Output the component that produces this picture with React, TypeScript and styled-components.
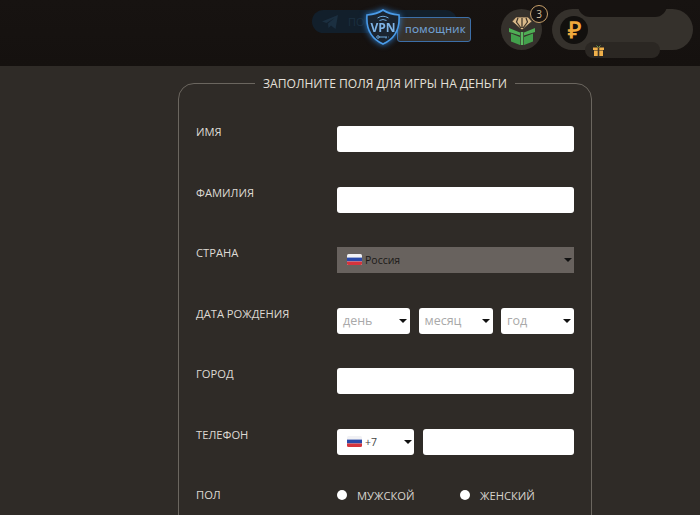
import React from 'react'
import styled, { createGlobalStyle } from 'styled-components'

const GlobalStyle = createGlobalStyle`
  html, body {
    margin: 0;
    height: 515px;
    overflow: hidden;
    background: #2f2b27;
    font-family: "Open Sans", "Liberation Sans", sans-serif;
  }
`

const Flag: React.FC = () => (
  <StyledFlag viewBox="0 0 15 11">
    <rect width="15" height="11" rx="1.5" fill="#f1f1f4" />
    <rect y="3.6" width="15" height="3.8" fill="#2a49a8" />
    <path d="M0 7.4h15v2.1a1.5 1.5 0 0 1-1.5 1.5h-12A1.5 1.5 0 0 1 0 9.5z" fill="#d5343c" />
  </StyledFlag>
)

const VpnShield: React.FC = () => (
  <StyledShield viewBox="0 0 36 36">
    <path
      d="M18 1 C23 4.500 28 5.500 34 6 C35 19 31 29 18 35 C5 29 1 19 2 6 C8 5.500 13 4.500 18 1z"
      fill="#1a2430"
      stroke="#4a9be8"
      strokeWidth="1.6"
    />
    <path d="M12.500 9 Q18 5.500 23.500 9 M14.500 11.500 Q18 9.500 21.500 11.500" fill="none" stroke="#6fa9dc" strokeWidth="1" />
    <text x="18" y="23" textAnchor="middle" fontSize="12" fontWeight="700" fill="#7fb4e6" fontFamily="Open Sans, sans-serif">
      VPN
    </text>
    <path d="M13.500 28 H22 M21 28 v1.500 M23 28 h0.500" stroke="#6fa9dc" strokeWidth="1" fill="none" />
    <circle cx="13" cy="28" r="1.300" fill="none" stroke="#6fa9dc" strokeWidth="0.900" />
  </StyledShield>
)

const GemBox: React.FC = () => (
  <svg width="28" height="30" viewBox="0 0 28 30">
    <path d="M8 2h12l4 4.500-10 8.500L4 6.500z" fill="#d9b98a" stroke="#3a3026" strokeWidth="0.800" />
    <path d="M10 3l-1.500 4L13 13M18 3l1.500 4L15 13M14 3v10" stroke="#3a3026" strokeWidth="1.200" fill="none" />
    <path d="M1 13l11 4.500v3L1 17z" fill="#4fae55" />
    <path d="M27 13l-11 4.500v3L27 17z" fill="#4fae55" />
    <path d="M3 18.500l9 3.500v8l-9-3.500z" fill="#43a14c" />
    <path d="M25 18.500l-9 3.500v8l9-3.500z" fill="#43a14c" />
    <rect x="12.700" y="17" width="2.600" height="13" fill="#5cbb62" />
  </svg>
)

const GiftIcon: React.FC = () => (
  <svg width="11" height="11" viewBox="0 0 11 11">
    <path d="M3.500 0.500L5.500 2.500 7.500 0.500" fill="none" stroke="#6f9a4c" strokeWidth="1" />
    <rect x="0" y="2.500" width="11" height="2.500" fill="#f0b04a" />
    <rect x="1" y="5.500" width="9" height="5.500" fill="#f0b04a" />
    <rect x="4.700" y="2.500" width="1.600" height="8.500" fill="#3a342c" />
  </svg>
)

const TelegramIcon: React.FC = () => (
  <svg width="16" height="14" viewBox="0 0 16 14">
    <path d="M0 6.500L16 0l-2.500 14-4.500-3.500-2.500 2.500-.5-4.500 6.500-5.500-8 5z" fill="#1b2f40" />
  </svg>
)

const App: React.FC = () => (
  <>
    <GlobalStyle />
    <Header>
      <GhostPill>
        <TelegramIcon />
        <GhostText>ПО</GhostText>
      </GhostPill>
      <VpnBanner>
        <VpnLabel>ПОМОЩНИК</VpnLabel>
        <VpnShield />
      </VpnBanner>
      <GemButton>
        <GemBox />
        <GemBadge>3</GemBadge>
      </GemButton>
      <BalancePill>
        <BalanceNotch />
        <RubleCoin>₽</RubleCoin>
        <BonusPill>
          <GiftIcon />
        </BonusPill>
      </BalancePill>
    </Header>
    <Form as="fieldset">
      <Legend>ЗАПОЛНИТЕ ПОЛЯ ДЛЯ ИГРЫ НА ДЕНЬГИ</Legend>
      <Row>
        <RowLabel>ИМЯ</RowLabel>
        <NameInput />
      </Row>
      <Row>
        <RowLabel>ФАМИЛИЯ</RowLabel>
        <TextInput />
      </Row>
      <Row>
        <RowLabel>СТРАНА</RowLabel>
        <CountrySelect>
          <Flag />
          Россия
          <Caret />
        </CountrySelect>
      </Row>
      <Row>
        <RowLabel>ДАТА РОЖДЕНИЯ</RowLabel>
        <DateGroup>
          <DateSelect>
            день
            <Caret />
          </DateSelect>
          <DateSelect>
            месяц
            <Caret />
          </DateSelect>
          <DateSelect>
            год
            <Caret />
          </DateSelect>
        </DateGroup>
      </Row>
      <Row>
        <RowLabel>ГОРОД</RowLabel>
        <TextInput />
      </Row>
      <Row>
        <RowLabel>ТЕЛЕФОН</RowLabel>
        <PhoneGroup>
          <PhoneCode>
            <Flag />
            +7
            <Caret />
          </PhoneCode>
          <TextInput />
        </PhoneGroup>
      </Row>
      <GenderRow>
        <GenderLabel>ПОЛ</GenderLabel>
        <GenderGroup>
          <RadioOption>
            <RadioDot />
            МУЖСКОЙ
          </RadioOption>
          <RadioOption>
            <RadioDot />
            ЖЕНСКИЙ
          </RadioOption>
        </GenderGroup>
      </GenderRow>
    </Form>
  </>
)

const Header = styled.header`
  position: relative;
  display: flex;
  align-items: flex-start;
  box-sizing: border-box;
  height: 66px;
  padding: 9px 7px 0 501px;
  gap: 10px;
  background: linear-gradient(#171311, #15110f);
`

const GhostPill = styled.div`
  position: absolute;
  left: 312px;
  top: 10px;
  width: 145px;
  height: 23px;
  box-sizing: border-box;
  padding-left: 10px;
  display: flex;
  align-items: center;
  gap: 10px;
  border-radius: 12px;
  background: #121f2b;
`

const GhostText = styled.span`
  font-size: 11px;
  color: #1b2f40;
`

const VpnBanner = styled.div`
  position: absolute;
  left: 365px;
  top: 9px;
  width: 106px;
  height: 36px;
`

const VpnLabel = styled.div`
  position: absolute;
  left: 32px;
  top: 8px;
  width: 74px;
  height: 25px;
  box-sizing: border-box;
  padding-left: 7px;
  line-height: 24px;
  border: 1px solid #3d6fa8;
  border-radius: 3px;
  background: #37322c;
  font-size: 9px;
  font-weight: 600;
  letter-spacing: 0.3px;
  color: #6f9fd0;
  white-space: nowrap;
`

const StyledShield = styled.svg`
  position: absolute;
  left: 0;
  top: 0;
  width: 36px;
  height: 36px;
  filter: drop-shadow(0 0 3px #2f7fd0);
`

const GemButton = styled.div`
  position: relative;
  flex: none;
  display: flex;
  align-items: center;
  justify-content: center;
  width: 41px;
  height: 41px;
  border-radius: 50%;
  background: #35312c;
`

const GemBadge = styled.span`
  position: absolute;
  right: -6px;
  top: -4px;
  box-sizing: border-box;
  width: 18px;
  height: 18px;
  border: 1px solid #c8a06a;
  border-radius: 50%;
  background: #171311;
  font-size: 10px;
  line-height: 16px;
  text-align: center;
  color: #d8c3a0;
`

const BalancePill = styled.div`
  position: relative;
  flex: none;
  display: flex;
  align-items: center;
  box-sizing: border-box;
  width: 141px;
  height: 41px;
  padding-left: 8px;
  border-radius: 21px;
  background: #35312c;
`

const BalanceNotch = styled.div`
  position: absolute;
  left: 26px;
  top: -9px;
  width: 89px;
  height: 17px;
  border-radius: 0 0 12px 12px;
  background: #171311;
`

const RubleCoin = styled.div`
  width: 28px;
  height: 28px;
  border-radius: 50%;
  background: #12100e;
  font-family: "Liberation Sans", sans-serif;
  font-size: 23px;
  font-weight: 700;
  line-height: 28px;
  text-align: center;
  color: #f0a93c;
`

const BonusPill = styled.div`
  position: absolute;
  left: 33px;
  top: 33px;
  display: flex;
  align-items: center;
  box-sizing: border-box;
  width: 75px;
  height: 16px;
  padding-left: 8px;
  border-radius: 8px;
  background: #2b2723;
`

const Form = styled.div`
  box-sizing: border-box;
  width: 414px;
  height: 560px;
  margin: 9px 0 0 178px;
  padding: 34px 17px 0;
  border: 1px solid #6b665f;
  border-radius: 16px;
  min-width: 0;
`

const Legend = styled.legend`
  margin: 0 auto;
  padding: 0 8px;
  font-size: 12.100px;
  line-height: 17px;
  color: #e4e0da;
`

const Row = styled.div`
  display: grid;
  grid-template-columns: 141px 237px;
  height: 26px;
  margin-bottom: 34.500px;
`

const GenderRow = styled(Row)`
  align-items: center;
  margin-top: -7px;
`

const RowLabel = styled.div`
  margin-top: -1px;
  padding-bottom: 2px;
  font-size: 11.200px;
  line-height: 14px;
  color: #dedad4;
`

const GenderLabel = styled(RowLabel)`
  margin-top: 0;
  padding-bottom: 0;
`

const TextInput = styled.div`
  height: 26px;
  flex: 1;
  border-radius: 3px;
  background: #fff;
`

const NameInput = styled(TextInput)`
  position: relative;

  &::after {
    content: "";
    position: absolute;
    left: 208px;
    top: -1px;
    width: 16px;
    height: 29px;
    border-radius: 4px;
    background: #e6e4e1;
    z-index: -1;
  }
`

const Caret = styled.i`
  margin-left: auto;
  width: 0;
  height: 0;
  border-left: 4px solid transparent;
  border-right: 4px solid transparent;
  border-top: 4px solid #111;
`

const CountrySelect = styled.div`
  display: flex;
  align-items: center;
  gap: 3px;
  height: 26px;
  box-sizing: border-box;
  padding: 0 2px 0 10px;
  background: #68625e;
  font-size: 10.500px;
  color: #1c1a18;
`

const StyledFlag = styled.svg`
  width: 15px;
  height: 11px;
  margin-top: -2px;
`

const DateGroup = styled.div`
  display: grid;
  grid-template-columns: 73px 74px 73px;
  gap: 8.500px;
`

const DateSelect = styled.div`
  display: flex;
  align-items: center;
  height: 26px;
  box-sizing: border-box;
  padding: 0 3px 0 6px;
  border-radius: 3px;
  background: #fff;
  font-size: 12.500px;
  color: #a9a9a9;
`

const PhoneGroup = styled.div`
  display: flex;
  gap: 9px;
`

const PhoneCode = styled.div`
  display: flex;
  align-items: center;
  gap: 3px;
  flex: none;
  width: 77px;
  height: 26px;
  box-sizing: border-box;
  padding: 0 2px 0 10px;
  border-radius: 3px;
  background: #fff;
  font-size: 10.500px;
  color: #444;

  ${StyledFlag} {
    margin-top: 0;
  }
`

const GenderGroup = styled.div`
  display: grid;
  grid-template-columns: 123px 114px;
`

const RadioOption = styled.div`
  display: flex;
  align-items: center;
  gap: 10px;
  font-size: 11.200px;
  color: #d8d4ce;
`

const RadioDot = styled.span`
  width: 10px;
  height: 10px;
  border-radius: 50%;
  background: #fff;
`

export default App
